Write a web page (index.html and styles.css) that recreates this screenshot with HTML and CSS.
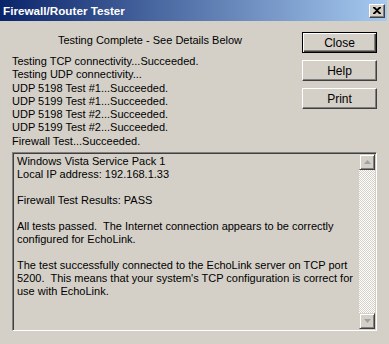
FILE: index.html
```html
<!DOCTYPE html>
<html lang="en">
  <head>
    <meta charset="UTF-8" />
    <title>Firewall/Router Tester</title>
    <link rel="stylesheet" href="styles.css">
  </head>
  <body>
    <div class="window">
      <div class="titlebar">
        <span class="title">Firewall/Router Tester</span>
        <span class="cap-btn">
          <svg width="8" height="7" viewBox="0 0 8 7">
            <path d="M0 0h2l2 2 2-2h2v1l-3 2.5 3 2.5v1h-2l-2-2-2 2h-2v-1l3-2.5-3-2.5z" fill="#000"/>
          </svg>
        </span>
      </div>

      <div class="top">
        <div class="status">
          <p class="heading">Testing Complete - See Details Below</p>
          <ul class="log">
            <li>Testing TCP connectivity...Succeeded.</li>
            <li>Testing UDP connectivity...</li>
            <li>UDP 5198 Test #1...Succeeded.</li>
            <li>UDP 5199 Test #1...Succeeded.</li>
            <li>UDP 5198 Test #2...Succeeded.</li>
            <li>UDP 5199 Test #2...Succeeded.</li>
            <li>Firewall Test...Succeeded.</li>
          </ul>
        </div>
        <div class="actions">
          <button class="btn default">Close</button>
          <button class="btn">Help</button>
          <button class="btn">Print</button>
        </div>
      </div>

      <div class="details">
        <div class="details-text">Windows Vista Service Pack 1
Local IP address: 192.168.1.33

Firewall Test Results: PASS

All tests passed.  The Internet connection appears to be correctly
configured for EchoLink.

The test successfully connected to the EchoLink server on TCP port
5200.  This means that your system's TCP configuration is correct for
use with EchoLink.</div>
        <div class="scrollbar">
          <span class="arrow">
            <svg width="7" height="4" viewBox="0 0 7 4"><path d="M3.5 0L7 4H0z" fill="#a0a0a0"/></svg>
          </span>
          <span class="track"></span>
          <span class="arrow">
            <svg width="7" height="4" viewBox="0 0 7 4"><path d="M0 0h7L3.5 4z" fill="#a0a0a0"/></svg>
          </span>
        </div>
      </div>
    </div>
  </body>
</html>
```

FILE: styles.css
```css
body {
  margin: 0;
  background: #d4d0c8;
  font-family: "Liberation Sans", Arial, sans-serif;
  font-size: 11px;
  color: #000;
}
.window {
  width: 389px;
  height: 344px;
  background: #d4d0c8;
}
.titlebar {
  width: 387px;
  height: 21px;
  box-sizing: border-box;
  display: flex;
  align-items: center;
  justify-content: space-between;
  padding: 0 2px 0 3px;
  background: linear-gradient(to right, #0a246a, #a6caf0);
}
.title {
  color: #fff;
  font-weight: bold;
  font-size: 11.7px;
}
.cap-btn {
  width: 16px;
  height: 14px;
  box-sizing: border-box;
  display: flex;
  align-items: center;
  justify-content: center;
  background: #d4d0c8;
  border: 1px solid;
  border-color: #fff #404040 #404040 #fff;
  box-shadow: inset -1px -1px #808080;
}

.top {
  display: flex;
  justify-content: space-between;
}
.status {
  width: 300px;
}
.heading {
  margin: 13px 0 0;
  text-align: center;
  line-height: 13px;
}
.log {
  list-style: none;
  margin: 8px 0 0;
  padding: 0 0 0 12px;
  line-height: 13.3px;
}
.actions {
  display: flex;
  flex-direction: column;
  gap: 7px;
  padding-top: 11px;
  margin-right: 12px;
}
.btn {
  width: 75px;
  height: 21px;
  margin: 0;
  padding: 0;
  font: inherit;
  font-size: 12px;
  color: #000;
  background: #d4d0c8;
  border: 1px solid;
  border-color: #fff #404040 #404040 #fff;
  box-shadow: inset -1px -1px #808080;
}
.btn.default {
  border-color: #000;
  box-shadow: inset 1px 1px #fff, inset -1px -1px #404040, inset -2px -2px #808080;
}

.details {
  margin: 4px 12px 0;
  height: 179px;
  box-sizing: border-box;
  display: flex;
  border: 1px solid;
  border-color: #808080 #fff #fff #808080;
  box-shadow: inset 1px 1px #404040, inset -1px -1px #d4d0c8;
  padding: 1px;
}
.details-text {
  flex: 1;
  white-space: pre;
  line-height: 13px;
  padding: 1px 0 0 3px;
}
.scrollbar {
  width: 16px;
  display: flex;
  flex-direction: column;
}
.arrow {
  height: 16px;
  box-sizing: border-box;
  display: flex;
  align-items: center;
  justify-content: center;
  background: #d4d0c8;
  border: 1px solid;
  border-color: #d4d0c8 #404040 #404040 #d4d0c8;
  box-shadow: inset 1px 1px #fff, inset -1px -1px #808080;
}
.track {
  flex: 1;
  background: repeating-conic-gradient(#d4d0c8 0 25%, #fff 0 50%) 0 0 / 2px 2px;
}
```
